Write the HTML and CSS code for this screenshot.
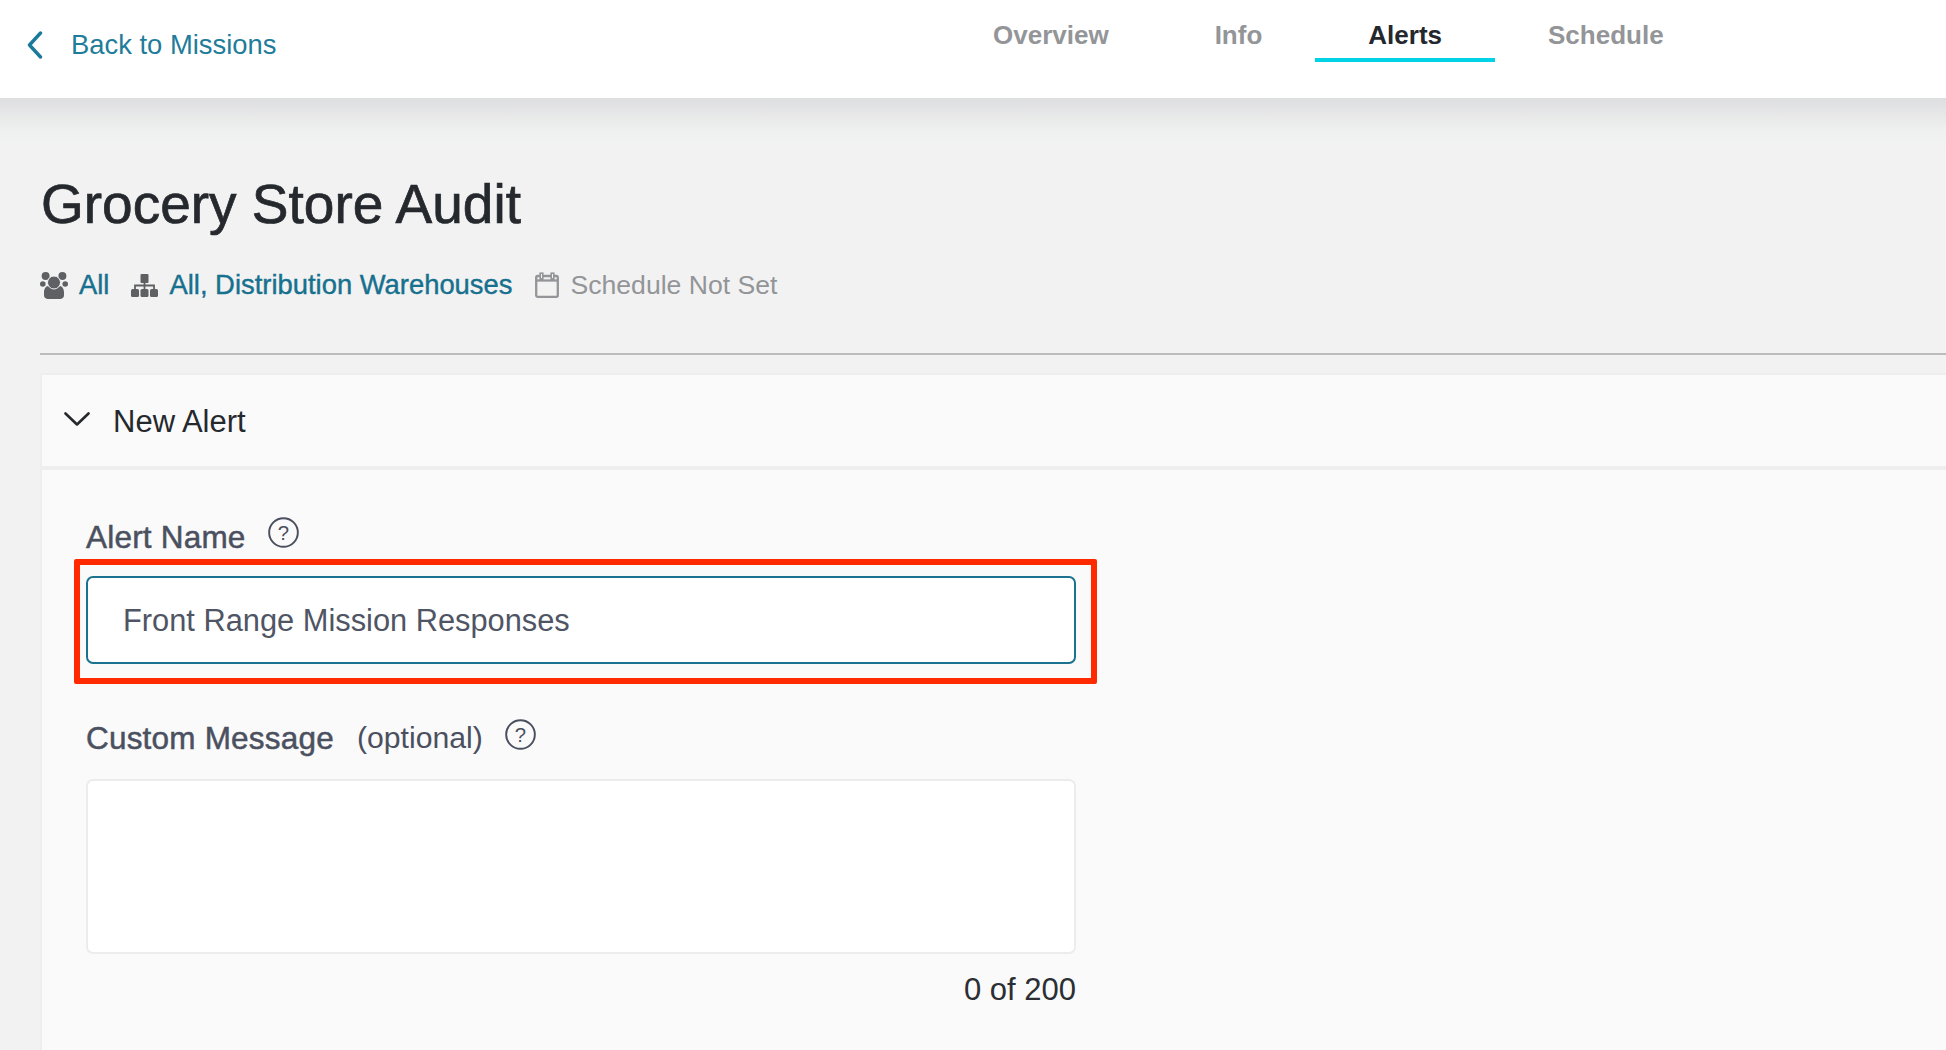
FILE: index.html
```html
<!DOCTYPE html>
<html lang="en">
<head>
<meta charset="utf-8">
<title>Grocery Store Audit</title>
<link rel="stylesheet" href="styles.css">
</head>
<body>
<header class="topbar">
  <a class="back" href="#">
    <svg class="back-icon" viewBox="0 0 16 28" aria-hidden="true"><path d="M13.5 2 2.5 14l11 12"/></svg>
    <span>Back to Missions</span>
  </a>
  <nav class="tabs">
    <a class="tab" href="#">Overview</a>
    <a class="tab" href="#">Info</a>
    <a class="tab active" href="#">Alerts</a>
    <a class="tab" href="#">Schedule</a>
  </nav>
</header>
<main class="page">
  <h1 class="title">Grocery Store Audit</h1>
  <div class="meta">
    <svg class="meta-icon users" viewBox="0 0 28 27" aria-hidden="true">
      <circle cx="5.600" cy="4" r="4"/><circle cx="22.400" cy="4" r="4"/>
      <circle cx="2.800" cy="12" r="2.800"/><circle cx="25.200" cy="12" r="2.800"/>
      <path d="M4 20c0-3 2-6 4-6 1.500 1 3.500 2 6 2s4.500-1 6-2c2 0 4 3 4 6v3.500c0 2-2 3.500-4 3.500H8c-2 0-4-1.500-4-3.500z"/>
      <circle class="users-head" cx="14" cy="10.500" r="6.500"/>
    </svg>
    <a class="meta-link first" href="#">All</a>
    <svg class="meta-icon sitemap" viewBox="0 0 27 23" aria-hidden="true">
      <rect x="9.500" y="0" width="8" height="9" rx="1"/>
      <path class="sitemap-lines" d="M13.500 9v6M4 15v-3.500h19V15"/>
      <rect x="0" y="15" width="8" height="8" rx="1.500"/><rect x="9.500" y="15" width="8" height="8" rx="1.500"/><rect x="19" y="15" width="8" height="8" rx="1.500"/>
    </svg>
    <a class="meta-link second" href="#">All, Distribution Warehouses</a>
    <svg class="meta-icon calendar" viewBox="0 0 24 26" aria-hidden="true">
      <rect x="1.200" y="4" width="21.600" height="20.800" rx="1.500"/>
      <path d="M1.200 8.500h21.600"/>
      <rect class="calendar-tab" x="5.200" y="1.200" width="2.600" height="6"/>
      <rect class="calendar-tab" x="16.200" y="1.200" width="2.600" height="6"/>
    </svg>
    <span class="meta-muted">Schedule Not Set</span>
  </div>
  <hr class="rule">
  <section class="card">
    <div class="card-head">
      <svg class="chevron" viewBox="0 0 26 14" aria-hidden="true"><path d="M1.500 1.500 13 12.500 24.500 1.500"/></svg>
      <span>New Alert</span>
    </div>
    <div class="card-body">
      <div class="label-row">
        <label class="label">Alert Name</label>
        <svg class="help" viewBox="0 0 32 32" aria-hidden="true"><circle cx="16" cy="16" r="14.800"/><text x="16" y="23.500" text-anchor="middle">?</text></svg>
      </div>
      <div class="highlight">
        <div class="input">Front Range Mission Responses</div>
      </div>
      <div class="label-row second-label">
        <label class="label">Custom Message</label>
        <span class="optional">(optional)</span>
        <svg class="help" viewBox="0 0 32 32" aria-hidden="true"><circle cx="16" cy="16" r="14.800"/><text x="16" y="23.500" text-anchor="middle">?</text></svg>
      </div>
      <div class="textarea"></div>
      <div class="counter">0 of 200</div>
    </div>
  </section>
</main>
</body>
</html>
```
FILE: styles.css
```css
* { box-sizing: border-box; }
html, body { margin: 0; height: 100%; }
body {
  width: 1946px;
  height: 1050px;
  overflow: hidden;
  font-family: "Liberation Sans", Arial, sans-serif;
  background: #f2f2f2;
  display: flex;
  flex-direction: column;
}
a { text-decoration: none; }

.topbar {
  flex: none;
  height: 98px;
  background: #fff;
  display: flex;
  align-items: flex-start;
}
.back {
  display: flex;
  align-items: center;
  gap: 28px;
  margin: 30px 0 0 27px;
  color: #1f7c9b;
  font-size: 27.400px;
  line-height: 30px;
  width: 913px;
}
.back-icon { flex: none; width: 16px; height: 28px; fill: none; stroke: #1a7a99; stroke-width: 3.400; stroke-linecap: round; stroke-linejoin: round; }

.tabs { display: flex; }
.tab {
  padding: 20px 53px 10px;
  height: 62px;
  font-size: 26px;
  line-height: 30px;
  font-weight: 700;
  color: #939598;
  border-bottom: 4px solid transparent;
}
.tab.active { color: #24282c; border-bottom-color: #00d3e6; }

.page {
  flex: 1;
  padding: 76px 0 0 40px;
  background: linear-gradient(#dddee0, #e8e8e9 18px, #eff0f0 34px, #f2f2f2 50px) no-repeat;
  display: flex;
  flex-direction: column;
}
.title {
  margin: 0 0 0 1px;
  font-size: 55px;
  line-height: 60px;
  font-weight: 400;
  color: #25292d;
  -webkit-text-stroke: 0.7px #25292d;
}
.meta {
  display: flex;
  align-items: center;
  margin-top: 36px;
  height: 30px;
  font-size: 27.400px;
  line-height: 30px;
}
.meta-icon { flex: none; }
.users { width: 28px; height: 27px; fill: #5e6064; }
.users-head { stroke: #f2f2f2; stroke-width: 1; }
.sitemap { width: 27px; height: 23px; fill: #5e6064; margin-left: 1px; }
.sitemap-lines { fill: none; stroke: #5e6064; stroke-width: 1.800; }
.calendar { width: 24px; height: 26px; fill: none; stroke: #939598; stroke-width: 2.300; }
.calendar-tab { fill: #f2f2f2; stroke-width: 1.600; }
.meta-link { color: #16708e; -webkit-text-stroke: 0.4px #16708e; }
.first { margin: 0 21px 0 11px; }
.second { margin: 0 23px 0 11px; }
.meta-muted { color: #939598; margin-left: 11px; font-size: 26.600px; }

.rule {
  margin: 53px 0 0;
  border: 0;
  height: 2px;
  background: #bcbcbc;
  flex: none;
}
.card {
  flex: 1;
  margin: 18px 0 0;
  background: #fafafa;
  border: 2px solid #eeeeee;
  border-width: 2px 0 0 2px;
}
.card-head {
  display: flex;
  align-items: center;
  gap: 23px;
  height: 95px;
  padding: 2px 0 0 22px;
  border-bottom: 4px solid #eeeeee;
  font-size: 31px;
  color: #25292d;
}
.chevron { flex: none; width: 26px; height: 14px; margin-top: -6px; fill: none; stroke: #25292d; stroke-width: 2.600; stroke-linecap: round; stroke-linejoin: round; }
.card-body { padding: 45px 0 0 44px; }
.label-row { display: flex; align-items: flex-start; height: 42px; }
.label { font-size: 31.500px; line-height: 40px; color: #4b5060; -webkit-text-stroke: 0.5px #4b5060; margin-top: 2px; letter-spacing: 0.2px; }
.optional { font-size: 30.200px; line-height: 40px; color: #4b5060; margin: 2px 0 0 23px; }
.help { flex: none; width: 31px; height: 31px; margin: 2px 0 0 22px; fill: none; stroke: #4b5060; stroke-width: 2; }
.second-label .help { margin-top: 3px; }
.help text { font-family: "Liberation Sans", Arial, sans-serif; font-size: 21px; fill: #4b5060; stroke: none; }

.highlight {
  width: 1023px;
  height: 125px;
  margin: 2px 0 0 -12px;
  padding: 11px 15px 14px 6px;
  border: 6px solid #ff2a00;
  border-radius: 2px;
}
.input {
  width: 990px;
  height: 88px;
  background: #fff;
  border: 2px solid #1a7290;
  border-radius: 7px;
  padding: 0 0 0 35px;
  font-size: 30.800px;
  line-height: 86px;
  color: #4f5564;
}
.second-label { margin-top: 32px; }
.textarea {
  width: 990px;
  height: 175px;
  margin-top: 21px;
  background: #fff;
  border: 2px solid #ececec;
  border-radius: 7px;
}
.counter {
  width: 990px;
  margin-top: 16px;
  text-align: right;
  font-size: 31px;
  line-height: 40px;
  color: #2b2f33;
}
```
